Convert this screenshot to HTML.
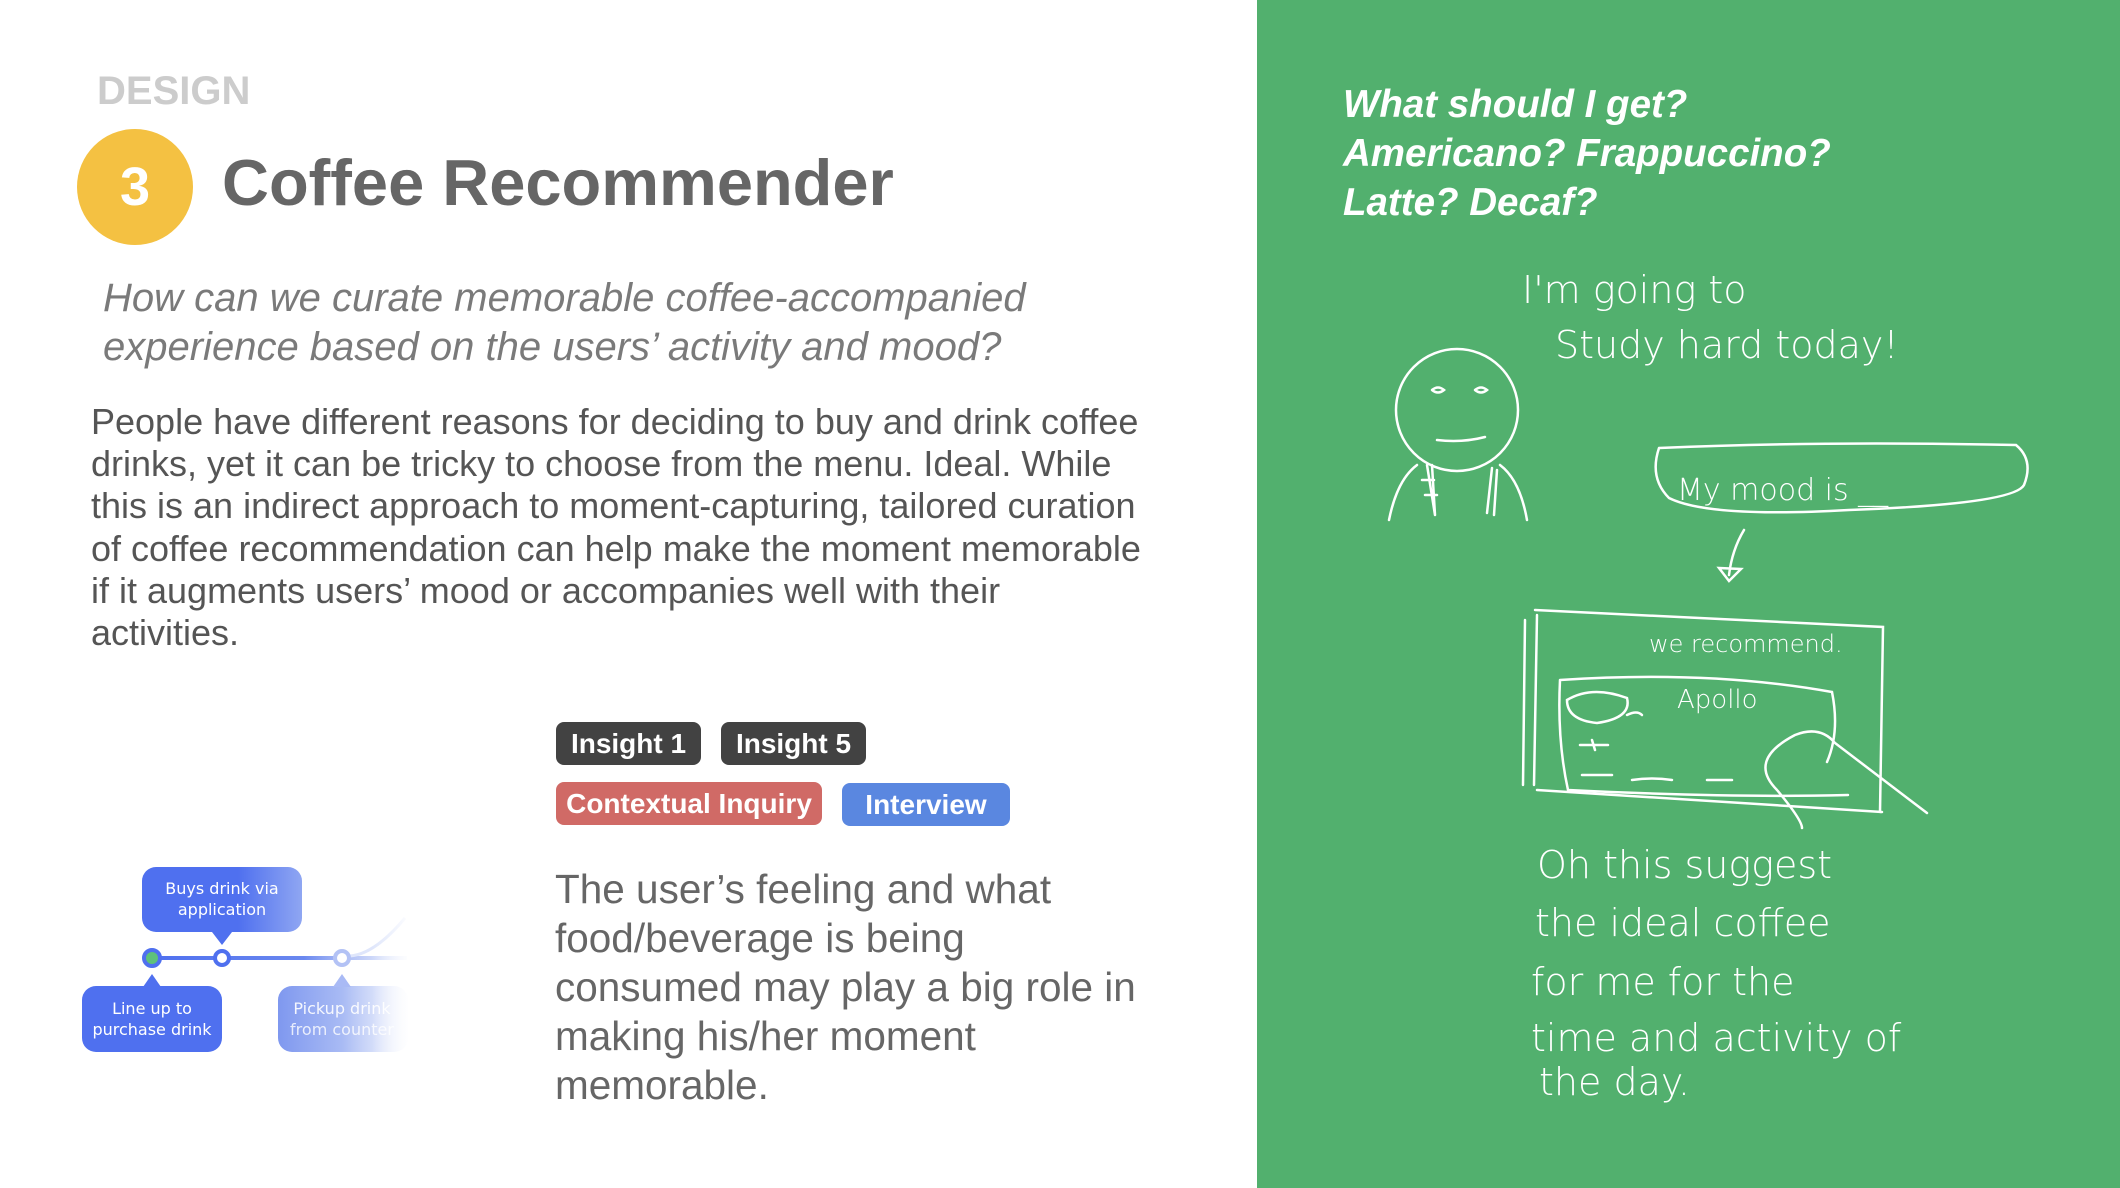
<!DOCTYPE html>
<html><head><meta charset="utf-8"><style>
*{margin:0;padding:0;box-sizing:border-box}
body{width:2120px;height:1188px;overflow:hidden;background:#fff;font-family:"Liberation Sans",sans-serif;position:relative}
.a{position:absolute;white-space:nowrap}
.design{left:97px;top:69px;font-size:40px;font-weight:bold;color:#cccccc}
.circ{left:77px;top:129px;width:116px;height:116px;border-radius:50%;background:#f4c142;color:#fff;font-size:54px;font-weight:bold;text-align:center;line-height:116px}
.title{left:222px;top:145px;font-size:65px;font-weight:bold;color:#666}
.q{left:103px;top:274px;font-size:40px;font-style:italic;color:#7a7a7a;line-height:49px}
.body{left:91px;top:401px;font-size:36px;color:#555;line-height:42.2px}
.tag{height:43px;border-radius:8px;color:#fff;font-size:28px;line-height:43px;text-align:center;font-weight:bold}
.p2{left:555px;top:865px;font-size:40.5px;color:#666;line-height:49px}
.green{left:1257px;top:0;width:863px;height:1188px;background:#52b06e}
.gq{left:1343px;top:80px;font-size:38.5px;font-weight:bold;font-style:italic;color:#fff;line-height:49px}
</style></head><body>
<div class="a design">DESIGN</div>
<div class="a circ">3</div>
<div class="a title">Coffee Recommender</div>
<div class="a q">How can we curate memorable coffee-accompanied<br>experience based on the users’ activity and mood?</div>
<div class="a body">People have different reasons for deciding to buy and drink coffee<br>drinks, yet it can be tricky to choose from the menu. Ideal. While<br>this is an indirect approach to moment-capturing, tailored curation<br>of coffee recommendation can help make the moment memorable<br>if it augments users’ mood or accompanies well with their<br>activities.</div>

<div class="a tag" style="left:556px;top:722px;width:145px;background:#424242">Insight 1</div>
<div class="a tag" style="left:721px;top:722px;width:145px;background:#424242">Insight 5</div>
<div class="a tag" style="left:556px;top:782px;width:266px;background:#d06a66">Contextual Inquiry</div>
<div class="a tag" style="left:842px;top:783px;width:168px;background:#5a87e0">Interview</div>

<div class="a p2">The user’s feeling and what<br>food/beverage is being<br>consumed may play a big role in<br>making his/her moment<br>memorable.</div>

<svg class="a" style="left:60px;top:850px" width="360" height="220">
<defs>
<linearGradient id="lg" gradientUnits="userSpaceOnUse" x1="92" x2="345" y1="0" y2="0"><stop offset="0" stop-color="#4f70ef"/><stop offset="0.6" stop-color="#6a88ef"/><stop offset="1" stop-color="#c8d4f8" stop-opacity=".4"/></linearGradient>
<linearGradient id="fg2" x1="0" x2="1"><stop offset="0" stop-color="#7f98ef"/><stop offset="0.5" stop-color="#a9bbf4"/><stop offset="1" stop-color="#eef2fd" stop-opacity=".6"/></linearGradient>
<linearGradient id="fg3" x1="0" x2="1"><stop offset="0" stop-color="#4f70ef"/><stop offset="0.6" stop-color="#4f70ef"/><stop offset="1" stop-color="#8fa6f2"/></linearGradient></defs>
<rect x="92" y="106" width="255" height="4" fill="url(#lg)"/>
<path d="M290 106 Q315 104 345 68" stroke="#dfe6fb" stroke-width="3" fill="none"/>
<rect x="82" y="17" width="160" height="65" rx="14" fill="url(#fg3)"/>
<path d="M152 82 L162 95 L172 82Z" fill="#4f70ef"/>
<rect x="22" y="136" width="140" height="66" rx="14" fill="#4f70ef"/>
<path d="M83 137 L92 124 L101 137Z" fill="#4f70ef"/>
<rect x="218" y="136" width="130" height="66" rx="14" fill="url(#fg2)"/>
<path d="M273 137 L282 124 L291 137Z" fill="#a9baf5"/>
<circle cx="92" cy="108" r="8" fill="#5ec27a" stroke="#4f70ef" stroke-width="4"/>
<circle cx="162" cy="108" r="7" fill="#fff" stroke="#4f70ef" stroke-width="4"/>
<circle cx="282" cy="108" r="7" fill="#fff" stroke="#b3c2f5" stroke-width="4"/>
<g font-family="DejaVu Sans" font-size="16" text-anchor="middle" fill="#fff">
<text x="162" y="44">Buys drink via</text>
<text x="162" y="65">application</text>
<text x="92" y="164">Line up to</text>
<text x="92" y="185">purchase drink</text>
<text x="282" y="164" fill-opacity=".9">Pickup drink</text>
<text x="282" y="185" fill-opacity=".8">from counter</text>
</g>
</svg>
<div class="a" style="left:372px;top:900px;width:50px;height:170px;background:linear-gradient(90deg,rgba(255,255,255,0),#fff 80%)"></div>

<div class="a green"></div>
<div class="a gq">What should I get?<br>Americano? Frappuccino?<br>Latte? Decaf?</div>

<svg class="a" style="left:1257px;top:0" width="863" height="1188" fill="none" stroke="#fff" stroke-width="2.5" stroke-linecap="round">
<g font-family="DejaVu Sans" font-weight="200" fill="#fff" stroke="none" font-size="38">
<text x="265" y="303" font-size="38">I'm   going   to</text>
<text x="298" y="358" font-size="38">Study   hard   today!</text>
<text x="420" y="500" font-size="30">My    mood  is __</text>
<text x="392" y="652" font-size="24">we  recommend.</text>
<text x="420" y="708" font-size="26">Apollo</text>
<text x="280" y="878">Oh  this  suggest</text>
<text x="278" y="936">the  ideal  coffee</text>
<text x="274" y="995">for me  for  the</text>
<text x="274" y="1051">time  and  activity  of</text>
<text x="282" y="1095">the  day.</text>
</g>
<circle cx="200" cy="410" r="61"/>
<path d="M175 390 q6 -5 12 0 q-6 5 -12 0 M218 390 q6 -5 12 0 q-6 5 -12 0"/>
<path d="M180 440 q25 3 48 -3"/>
<path d="M160 465 q-20 15 -28 55 M170 465 l8 50 M165 480 l12 0 M168 495 l12 0 M175 465 l3 50"/>
<path d="M243 465 q20 15 27 55 M235 468 l-5 45 M240 470 l-3 45"/>
<path d="M402 448 q-10 30 10 50 q40 20 180 12 q165 -6 175 -25 q10 -25 -8 -40 q-200 -4 -357 3"/>
<path d="M487 530 q-12 20 -15 45 M462 568 l10 13 l12 -12 z"/>
<path d="M280 615 l-3 170 M268 620 l-2 165 M278 610 l348 17 l-3 185 M280 790 l345 22"/>
<path d="M303 680 q-3 60 8 110 q160 8 280 5 M303 680 q150 -10 272 12 q8 40 -5 70"/>
<path d="M310 700 q25 -15 60 -2 q5 20 -30 25 q-30 -3 -30 -23z M370 715 q10 -5 15 0"/>
<path d="M323 745 l28 0 M335 740 l3 10"/>
<path d="M325 775 l30 0 M375 780 q20 -3 40 0 M450 780 l25 0"/>
<path d="M520 790 q-30 -30 18 -55 q25 -10 40 8 l92 70 M520 790 q25 30 25 38"/>
</svg>
</body></html>
